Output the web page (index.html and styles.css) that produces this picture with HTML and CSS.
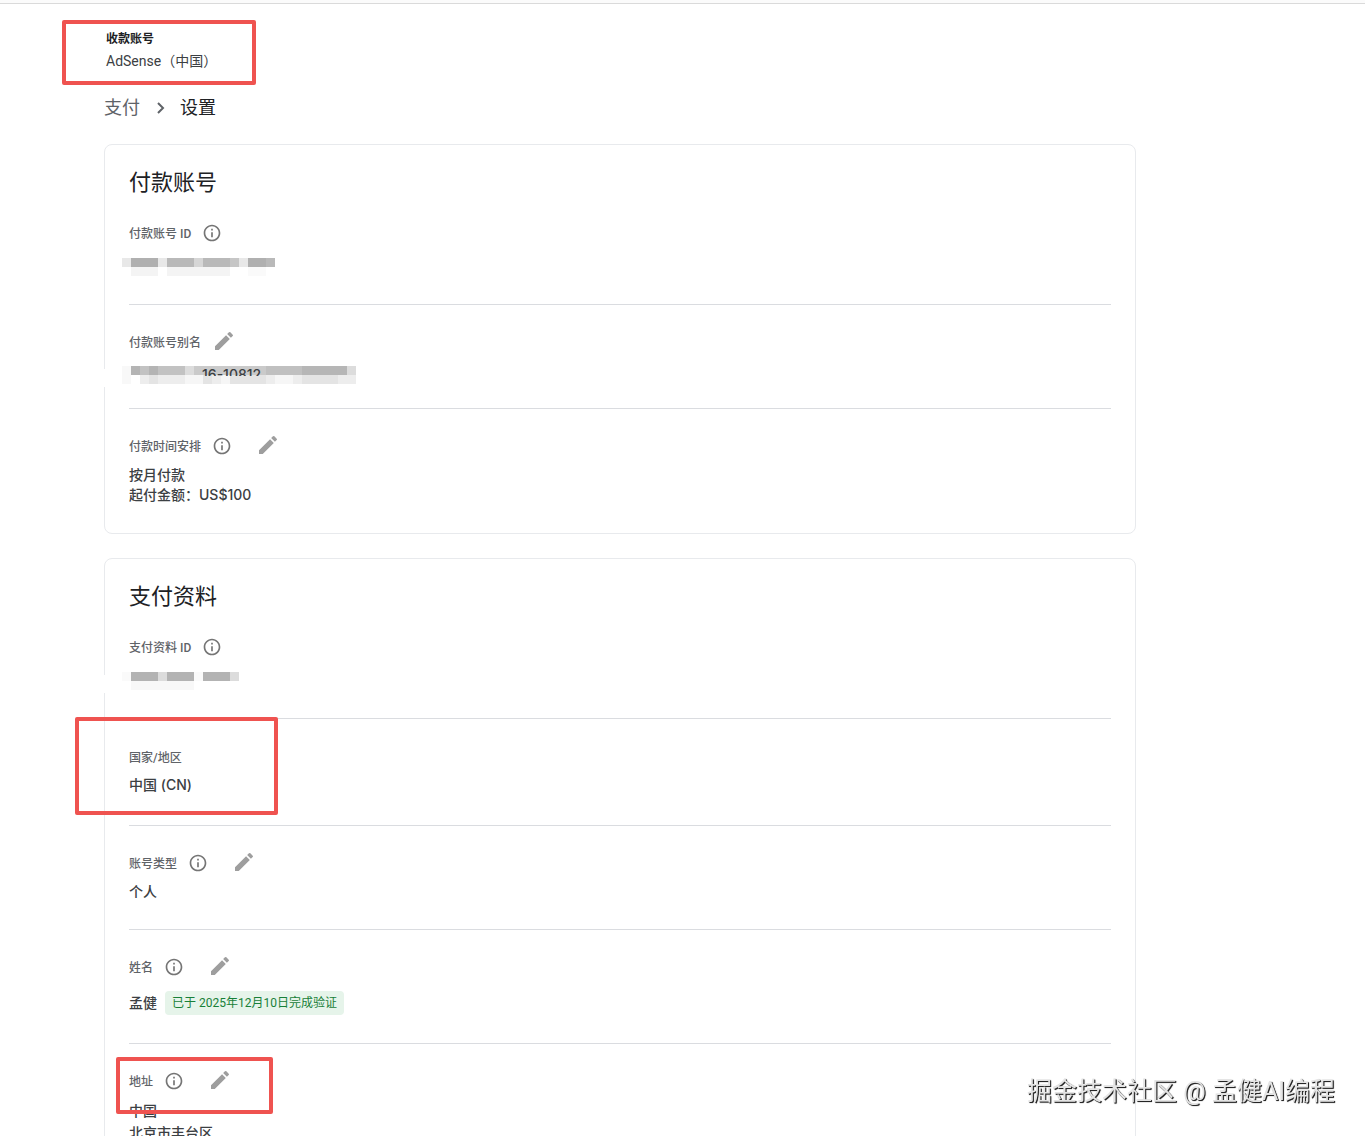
FILE: index.html
```html
<!DOCTYPE html>
<html lang="zh-CN">
<head>
<meta charset="utf-8">
<meta name="viewport" content="width=device-width, initial-scale=1">
<title>支付设置</title>
<link rel="stylesheet" href="styles.css">
</head>
<body>
<svg class="sprite" aria-hidden="true">
  <symbol id="info" viewBox="0 0 24 24"><path d="M11 7h2v2h-2zm0 4h2v6h-2zm1-9C6.480 2 2 6.480 2 12s4.480 10 10 10 10-4.480 10-10S17.520 2 12 2zm0 18c-4.410 0-8-3.590-8-8s3.590-8 8-8 8 3.590 8 8-3.590 8-8 8z"/></symbol>
  <symbol id="edit" viewBox="0 0 24 24"><path d="M3 17.250V21h3.750L17.810 9.940l-3.750-3.750L3 17.250zM20.710 7.040a1 1 0 0 0 0-1.410l-2.340-2.340a1 1 0 0 0-1.410 0l-1.830 1.830 3.750 3.750 1.830-1.830z"/></symbol>
</svg>
<div class="topbar"></div>
<div class="page">
  <header class="account marked marked--account">
    <div class="account__label">收款账号</div>
    <div class="account__name">AdSense（中国）</div>
  </header>
  <nav class="crumbs" aria-label="路径">
    <a href="#">支付</a>
    <svg class="crumbs__arrow" viewBox="0 0 24 24" aria-hidden="true"><path d="M10 7l5 5-5 5"/></svg>
    <span aria-current="page">设置</span>
  </nav>
  <main>
    <section class="card">
      <h2>付款账号</h2>
      <div class="field field--id">
        <div class="label"><h3>付款账号 ID</h3><button type="button" aria-label="说明"><svg class="info"><use href="#info"/></svg></button></div>
        <div class="value">
          <svg class="mosaic" width="153" height="18" aria-hidden="true">
            <path fill="#e8e8e8" d="M0 0h153v9H0z"/><path fill="#b0b0b0" d="M9 0h27v9H9zM126 0h18v9h-18z"/><path fill="#b9b9b9" d="M45 0h27v9H45zM81 0h27v9H81zM144 0h9v9h-9z"/><path fill="#d6d6d6" d="M72 0h9v9h-9z"/><path fill="#c6c6c6" d="M108 0h9v9h-9z"/><path fill="#f4f4f4" d="M9 9h27v9H9zM45 9h63v9H45z"/><path fill="#fafafa" d="M126 9h18v9h-18z"/>
          </svg>
        </div>
      </div>
      <div class="field field--alias field--erased">
        <div class="label"><h3>付款账号别名</h3><button type="button" aria-label="修改"><svg class="edit"><use href="#edit"/></svg></button></div>
        <div class="value">
          <svg class="mosaic" width="234" height="18" aria-hidden="true">
            <path fill="#f8f8f8" d="M0 0h9v18H0z"/><path fill="#c2c2c2" d="M9 0h54v9H9z"/><path fill="#b4b4b4" d="M9 0h9v9H9zM27 0h9v9h-9z"/><path fill="#dcdcdc" d="M63 0h9v9h-9zM225 0h9v9h-9z"/><path fill="#cacaca" d="M72 0h72v9H72z"/><path fill="#c0c0c0" d="M144 0h36v9h-36z"/><path fill="#b6b6b6" d="M180 0h45v9h-45z"/><path fill="#ededed" d="M18 9h216v9H18z"/><path fill="#e4e4e4" d="M27 9h9v9h-9zM81 9h9v9h-9zM108 9h36v9h-36zM180 9h36v9h-36z"/><path fill="#f6f6f6" d="M63 9h18v9H63zM99 9h9v9h-9zM153 9h18v9h-18z"/>
          </svg>
          <span class="remnant"><span>16-10812</span></span>
        </div>
      </div>
      <div class="field">
        <div class="label"><h3>付款时间安排</h3><button type="button" aria-label="说明"><svg class="info"><use href="#info"/></svg></button><button type="button" aria-label="修改"><svg class="edit"><use href="#edit"/></svg></button></div>
        <div class="value">按月付款<br>起付金额：US$100</div>
      </div>
    </section>
    <section class="card">
      <h2>支付资料</h2>
      <div class="field field--id field--erased">
        <div class="label"><h3>支付资料 ID</h3><button type="button" aria-label="说明"><svg class="info"><use href="#info"/></svg></button></div>
        <div class="value">
          <svg class="mosaic" width="117" height="18" aria-hidden="true">
            <path fill="#fafafa" d="M0 0h117v9H0z"/><path fill="#b3b3b3" d="M9 0h27v9H9zM45 0h27v9H45zM81 0h27v9H81z"/><path fill="#dcdcdc" d="M36 0h9v9h-9zM108 0h9v9h-9z"/><path fill="#f8f8f8" d="M9 9h63v9H9z"/>
          </svg>
        </div>
      </div>
      <div class="field field--region marked marked--region">
        <div class="label"><h3>国家/地区</h3></div>
        <div class="value">中国 (CN)</div>
      </div>
      <div class="field">
        <div class="label"><h3>账号类型</h3><button type="button" aria-label="说明"><svg class="info"><use href="#info"/></svg></button><button type="button" aria-label="修改"><svg class="edit"><use href="#edit"/></svg></button></div>
        <div class="value">个人</div>
      </div>
      <div class="field field--name">
        <div class="label"><h3>姓名</h3><button type="button" aria-label="说明"><svg class="info"><use href="#info"/></svg></button><button type="button" aria-label="修改"><svg class="edit"><use href="#edit"/></svg></button></div>
        <div class="value">孟健<span class="badge">已于 2025年12月10日完成验证</span></div>
      </div>
      <div class="field field--address marked marked--address">
        <div class="label"><h3>地址</h3><button type="button" aria-label="说明"><svg class="info"><use href="#info"/></svg></button><button type="button" aria-label="修改"><svg class="edit"><use href="#edit"/></svg></button></div>
        <div class="value">中国<br>北京市丰台区</div>
      </div>
    </section>
  </main>
</div>
<div class="watermark">掘金技术社区 @ 孟健AI编程</div>
</body>
</html>
```
FILE: styles.css
```css
*,
*::before,
*::after { box-sizing: border-box; }

html { scrollbar-width: none; }

body {
  margin: 0;
  background: #fff;
  color: #3c4043;
  font: 14px/20px Roboto, "Noto Sans CJK SC", sans-serif;
}

h2, h3 { margin: 0; }

button {
  display: flex;
  padding: 0;
  border: 0;
  background: none;
  cursor: pointer;
}

.sprite { display: none; }

.topbar {
  height: 4px;
  background: #fbfbfb;
  border-bottom: 1px solid #dadada;
}

.page {
  max-width: 1160px;
  padding: 24px 24px 0 104px;
}

.account {
  padding-left: 2px;
}

.account__label {
  color: #202124;
  font-size: 12px;
  font-weight: 700;
  line-height: 22px;
}

.account__name {
  padding-top: 1px;
}

.crumbs {
  display: flex;
  align-items: center;
  gap: 8px;
  padding: 25px 0 24px;
  color: #202124;
  font-size: 18px;
  line-height: 24px;
}

.crumbs a {
  color: #5f6368;
  text-decoration: none;
}

.crumbs__arrow {
  width: 24px;
  height: 24px;
  fill: none;
  stroke: #5f6368;
  stroke-width: 2;
}

.card {
  margin-bottom: 24px;
  padding: 23px 24px 1px;
  border: 1px solid #e8eaed;
  border-radius: 8px;
}

.card h2 {
  color: #202124;
  font-size: 22px;
  font-weight: 400;
  line-height: 30px;
}

.field {
  display: flex;
  flex-direction: column;
  gap: 7px;
  padding: 25px 0 27px;
  border-bottom: 1px solid #dadce0;
}

.field:last-child { border-bottom: 0; }

.field--id {
  gap: 12px;
}

.card h2 + .field { padding-top: 23px; }

.field--alias {
  gap: 11px;
  padding-bottom: 23px;
}

.field--region {
  gap: 6px;
  padding: 26px 0 30px;
}

.field--name {
  gap: 12px;
  padding-bottom: 28px;
}

.label {
  display: flex;
  align-items: center;
  height: 24px;
}

.label h3 {
  margin-right: 11px;
  padding-top: 2px;
  color: #5f6368;
  font-size: 12px;
  font-weight: 500;
  line-height: 22px;
}

.label button + button { margin-left: 24px; }

.info {
  width: 20px;
  height: 20px;
  fill: #757575;
}

.edit {
  width: 24px;
  height: 24px;
  margin-bottom: 2px;
  fill: #9e9e9e;
}

.value {
  position: relative;
  min-height: 20px;
  font-family: Inter, "Noto Sans CJK SC", sans-serif;
  font-weight: 500;
}

.field--name .value {
  display: flex;
  align-items: center;
  gap: 8px;
}

.field--address .value { line-height: 22px; }

.badge {
  padding: 0 7px;
  border-radius: 4px;
  background: #e6f4ea;
  color: #188038;
  font: 12px/24px Roboto, "Noto Sans CJK SC", sans-serif;
}

.mosaic {
  display: block;
  margin: 1px 0 1px -7px;
}

/* Blanked strip over the card edge beside a hidden value */
.field--erased .value::before {
  content: "";
  position: absolute;
  top: 4px;
  left: -28px;
  width: 12px;
  height: 18px;
  background: #fff;
}

.remnant {
  position: absolute;
  top: 4px;
  left: 73px;
  height: 7px;
  overflow: hidden;
}

.remnant span {
  display: block;
  margin-top: -4px;
}

/* Red highlight frames */
.marked { position: relative; }

.marked::after {
  content: "";
  position: absolute;
  border: 4px solid #ef5350;
  border-radius: 2px;
  pointer-events: none;
}

.marked--account::after {
  top: -8px;
  left: -42px;
  width: 194px;
  height: 65px;
}

.marked--region::after {
  top: -2px;
  left: -54px;
  width: 203px;
  height: 98px;
}

.marked--address::after {
  top: 13px;
  left: -13px;
  width: 157px;
  height: 57px;
}

.watermark {
  position: fixed;
  right: 30px;
  bottom: 26px;
  color: #e4e4e4;
  font: 25px/36px Roboto, "Noto Sans CJK SC", sans-serif;
  text-shadow: 1px 1px 1px #222, 1px 1px 0 #444;
}
```
